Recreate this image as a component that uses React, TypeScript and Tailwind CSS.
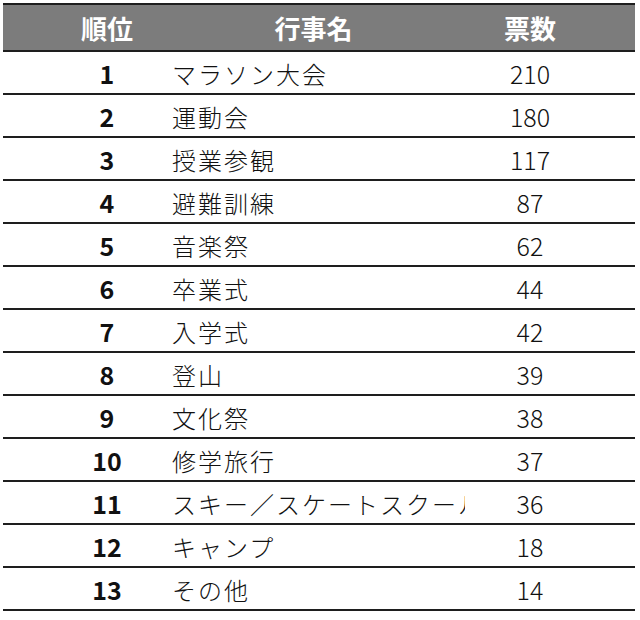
const rows = [
  { rank: 1, name: "マラソン大会", votes: 210 },
  { rank: 2, name: "運動会", votes: 180 },
  { rank: 3, name: "授業参観", votes: 117 },
  { rank: 4, name: "避難訓練", votes: 87 },
  { rank: 5, name: "音楽祭", votes: 62 },
  { rank: 6, name: "卒業式", votes: 44 },
  { rank: 7, name: "入学式", votes: 42 },
  { rank: 8, name: "登山", votes: 39 },
  { rank: 9, name: "文化祭", votes: 38 },
  { rank: 10, name: "修学旅行", votes: 37 },
  { rank: 11, name: "スキー／スケートスクール", votes: 36 },
  { rank: 12, name: "キャンプ", votes: 18 },
  { rank: 13, name: "その他", votes: 14 },
];

export default function App() {
  return (
    <div
      className="w-[640px] h-[620px] bg-white pt-[3px] pl-[3px]"
      style={{ fontFamily: '"Noto Sans CJK JP", "Noto Sans", sans-serif' }}
    >
      <div className="w-[632px]">
        {/* header */}
        <div className="grid grid-cols-[159px_303px_170px] h-[49px] bg-[#7c7c7c] border-y-2 border-[#1e1e1e] text-white font-bold text-[26px] items-center">
          <div className="pl-[49px] text-center">順位</div>
          <div className="text-center">行事名</div>
          <div className="pr-[40px] text-center">票数</div>
        </div>

        {rows.map((r) => (
          <div
            key={r.rank}
            className="grid grid-cols-[159px_303px_170px] h-[43px] border-b-2 border-[#1e1e1e] items-center text-[#111]"
          >
            <div className="pl-[49px] text-center font-bold text-[25px] leading-[41px] pt-[1px]">{r.rank}</div>
            <div className="pl-[10px] overflow-hidden whitespace-nowrap font-light text-[24px] tracking-[2px] leading-[41px]">
              {r.name}
            </div>
            <div className="pr-[40px] text-center font-light text-[25px] leading-[41px]">{r.votes}</div>
          </div>
        ))}
      </div>
    </div>
  );
}
